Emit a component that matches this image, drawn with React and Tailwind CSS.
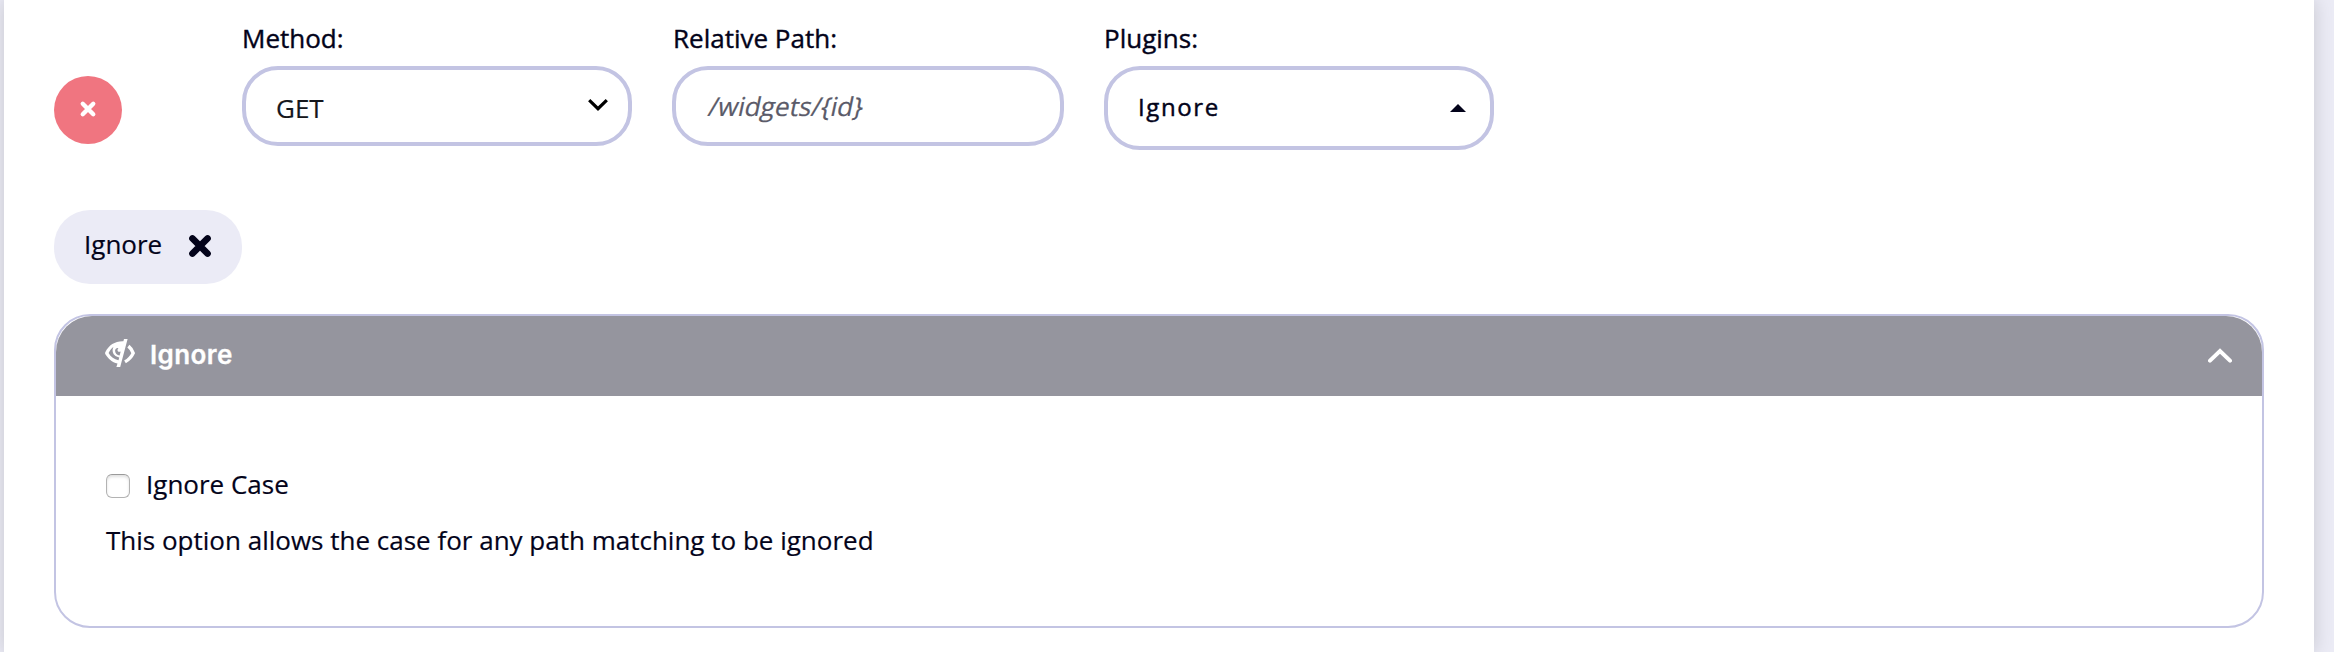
function Label({ children, className = "" }) {
  return (
    <div className="mb-[22px] h-9 pt-3">
      <div className={`h-9 text-[26px] leading-9 text-[#03031a] [-webkit-text-stroke:0.4px_#03031a] ${className}`}>{children}</div>
    </div>
  );
}

function CrossIcon({ className, strokeWidth }) {
  return (
    <svg viewBox="0 0 24 24" className={className} fill="none" stroke="currentColor" strokeWidth={strokeWidth} strokeLinecap="round">
      <path d="M5 5 19 19M19 5 5 19" />
    </svg>
  );
}

function EyeSlashIcon() {
  return (
    <svg viewBox="0 0 30 28" className="h-7 w-[30px] shrink-0" fill="none">
      <path fillRule="evenodd" fill="white" d="M19 0H22.6L15.2 28H11.4L12.5 24.6C7 23.6 3 19.5 0.4 15.3Q-0.2 14.2 0.4 13C4 6.2 9.5 2.4 17.6 2.3H18.4ZM13.5 21.2 14.2 18.4C10.5 18 7.6 15.2 7.6 11.6 7.6 10 8 8.9 8.6 7.8 6.5 9.3 4.8 11.5 3.6 14 5.8 17.8 9.2 20.6 13.5 21.2ZM10.1 11.6C10 14.3 12 16.2 14.6 16.4L15.7 12.4C14.8 13.1 13.2 13 12.7 11.9 12.2 10.9 12.7 9.8 13.4 9.2 11.6 8.8 10.3 10 10.1 11.6Z" />
      <path d="M23.4 7.2C25.4 8.8 27 11 28.2 14.1 26.4 18 23.6 20.8 20 22.9" stroke="white" strokeWidth="3.4" />
    </svg>
  );
}

export default function App() {
  return (
    <div className="h-[652px] overflow-hidden bg-[#ebebf5] pl-1 pr-5 font-['Open_Sans',sans-serif] text-[26px] text-[#03031a]">
      <main className="h-full bg-white px-[50px] pt-2 shadow-[0_0_18px_rgba(0,0,0,0.16)]">
        <section className="flex h-[202px] items-start">
          <button aria-label="Remove" className="mt-[68px] flex size-[68px] items-center justify-center rounded-full bg-[#f07580] text-white">
            <CrossIcon className="size-[18px] -translate-y-px" strokeWidth={5.8} />
          </button>
          <div className="ml-[120px] w-[390px]">
            <Label>Method:</Label>
            <div className="flex h-20 items-center justify-between rounded-[36px] border-4 border-[#c3c4e3] pl-[30px] pr-5">
              <span className="pt-1 text-[#15171c] [-webkit-text-stroke:0.2px_#15171c]">GET</span>
              <svg viewBox="0 0 20 12" className="mb-0.5 h-3 w-5" fill="none" stroke="black" strokeWidth="3.2"><path d="M1.2 1.2 10 9.7 18.8 1.2" /></svg>
            </div>
          </div>
          <div className="ml-10 w-[392px]">
            <Label className="pl-px">Relative Path:</Label>
            <div className="flex h-20 items-center rounded-[36px] border-4 border-[#c3c4e3] pl-[33px] pt-0.5">
              <span className="-skew-x-12 text-[26.1px] text-[#5b5b69] [-webkit-text-stroke:0.2px_#5b5b69]">/widgets/&#123;id&#125;</span>
            </div>
          </div>
          <div className="ml-10 w-[390px]">
            <Label>Plugins:</Label>
            <div className="flex h-[84px] items-center justify-between rounded-[36px] border-4 border-[#c3c4e3] pl-[30px] pr-6">
              <span className="-mt-0.5 text-2xl tracking-[1.6px] [-webkit-text-stroke:0.45px_#03031a]">Ignore</span>
              <svg viewBox="0 0 16 8" className="h-2 w-4"><path d="M0 8 8 0 16 8Z" fill="#03031a" /></svg>
            </div>
          </div>
        </section>
        <div className="flex h-[74px] w-[188px] items-center rounded-[36px] bg-[#ebebf6] pl-[30px]">
          <span className="-mt-1.5 w-[103px] [-webkit-text-stroke:0.2px_#03031a]">Ignore</span>
          <CrossIcon className="size-[26px] -translate-y-px" strokeWidth={6} />
        </div>
        <section className="mt-[30px] h-[314px] rounded-[36px] border-2 border-[#c3c4e3] bg-white">
          <header className="flex h-20 items-center rounded-t-[36px] bg-[#95959e] pl-[49px] pr-[30px] text-white">
            <div className="-mt-1.5"><EyeSlashIcon /></div>
            <span className="-mt-1 ml-[15px] font-['Inter',sans-serif] text-[26px] font-semibold tracking-[0.4px] [-webkit-text-stroke:0.3px_white]">Ignore</span>
            <svg viewBox="0 0 24 15" className="-mt-0.5 ml-auto h-[15px] w-6" fill="none" stroke="white" strokeWidth="4" strokeLinecap="round"><path d="M2 12.6 12 3 22 12.6" /></svg>
          </header>
          <div className="px-[50px] pt-[68px]">
            <label className="flex h-10 items-center gap-4">
              <span className="mt-1 size-6 rounded-[6px] border border-[#b3b3b3] border-t-[#9a9a9a] bg-white shadow-[inset_0_2px_3px_rgba(0,0,0,0.12)]" />
              <span className="[-webkit-text-stroke:0.2px_#03031a]">Ignore Case</span>
            </label>
            <p className="mt-4 h-10 leading-10 [-webkit-text-stroke:0.2px_#03031a]">This option allows the case for any path matching to be ignored</p>
          </div>
        </section>
      </main>
    </div>
  );
}
